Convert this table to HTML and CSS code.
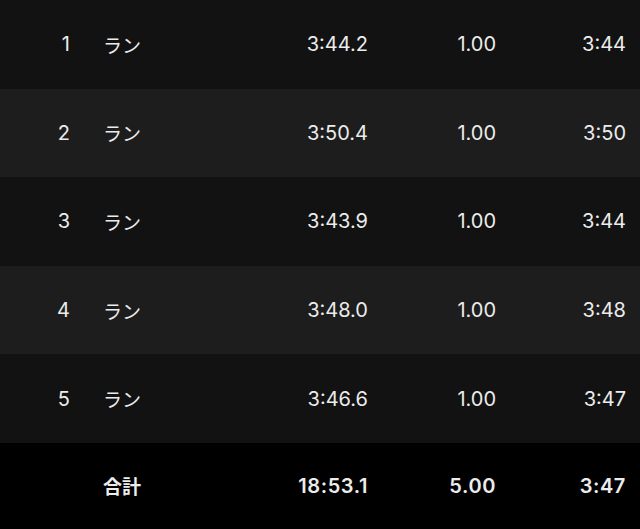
FILE: index.html
```html
<!DOCTYPE html>
<html lang="ja">
<head>
<meta charset="utf-8">
<link rel="stylesheet" href="styles.css">
</head>
<body>
<div class="table">
  <div class="row odd"><span class="num">1</span><span class="label">ラン</span><span class="val">3:44.2</span><span class="val">1.00</span><span class="val">3:44</span></div>
  <div class="row even"><span class="num">2</span><span class="label">ラン</span><span class="val">3:50.4</span><span class="val">1.00</span><span class="val">3:50</span></div>
  <div class="row odd"><span class="num">3</span><span class="label">ラン</span><span class="val">3:43.9</span><span class="val">1.00</span><span class="val">3:44</span></div>
  <div class="row even"><span class="num">4</span><span class="label">ラン</span><span class="val">3:48.0</span><span class="val">1.00</span><span class="val">3:48</span></div>
  <div class="row odd"><span class="num">5</span><span class="label">ラン</span><span class="val">3:46.6</span><span class="val">1.00</span><span class="val">3:47</span></div>
  <div class="row total"><span class="num"></span><span class="label">合計</span><span class="val">18:53.1</span><span class="val">5.00</span><span class="val">3:47</span></div>
</div>
</body>
</html>
```
FILE: styles.css
```css
html, body {
  margin: 0;
  padding: 0;
  background: #000;
}
body {
  width: 640px;
  height: 529px;
  overflow: hidden;
  font-family: Inter, "Noto Sans CJK JP", sans-serif;
  color: #ececec;
  font-size: 20px;
}
.table {
  display: flex;
  flex-direction: column;
}
.row {
  display: grid;
  grid-template-columns: 70px 1fr 121px 128px 130px;
  padding-right: 14px;
  height: 88.6px;
  align-items: center;
}
.odd { background: #121212; }
.even { background: #1d1d1d; }
.total {
  background: #000;
  height: 86px;
  font-weight: 600;
}
.total .val { letter-spacing: 0.6px; }
.num { text-align: right; }
.label { padding-left: 33px; font-size: 19px; }
.val { text-align: right; }
```
